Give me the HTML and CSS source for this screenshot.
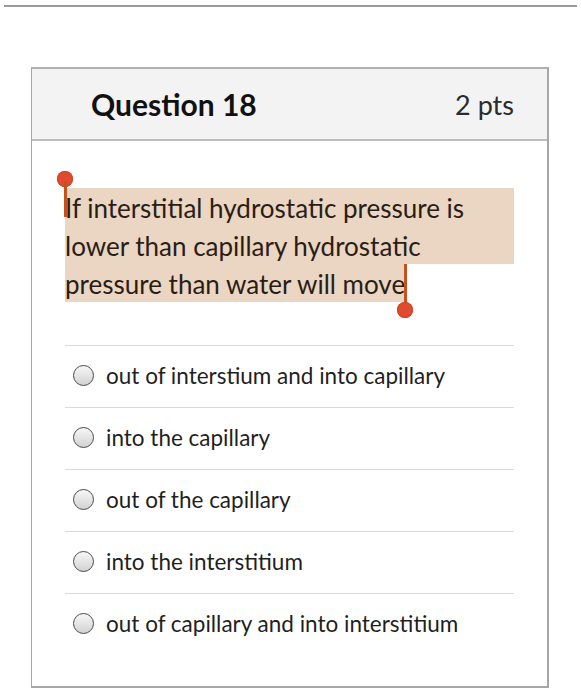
FILE: index.html
```html
<!DOCTYPE html>
<html lang="en">
<head>
<meta charset="utf-8">
<title>Question 18</title>
<link rel="stylesheet" href="styles.css">
</head>
<body>
<div class="top-rule"></div>
<div class="card">
  <div class="card-header">
    <h2 class="q-title">Question 18</h2>
    <span class="q-pts">2 pts</span>
  </div>
  <div class="card-body">
    <div class="q-text">
      <span class="sel-line">If interstitial hydrostatic pressure is</span>
      <span class="sel-line">lower than capillary hydrostatic</span>
      <span class="sel-last">pressure than water will move<span class="handle handle-end"><span class="stem"></span><span class="knob"></span></span></span>
      <span class="handle handle-start"><span class="knob"></span><span class="stem"></span></span>
    </div>
    <ul class="answers">
      <li class="answer"><span class="radio"></span><span class="answer-text">out of interstium and into capillary</span></li>
      <li class="answer"><span class="radio"></span><span class="answer-text">into the capillary</span></li>
      <li class="answer"><span class="radio"></span><span class="answer-text">out of the capillary</span></li>
      <li class="answer"><span class="radio"></span><span class="answer-text">into the interstitium</span></li>
      <li class="answer"><span class="radio"></span><span class="answer-text">out of capillary and into interstitium</span></li>
    </ul>
  </div>
</div>
</body>
</html>
```

FILE: styles.css
```css
* { box-sizing: border-box; }
html, body { margin: 0; padding: 0; background: #fff; }
body {
  font-family: Lato, "Open Sans", "Liberation Sans", sans-serif;
  color: #1e1a1a;
  width: 581px;
  height: 693px;
  overflow: hidden;
}
.top-rule {
  margin: 5px 0 0 4px;
  width: 573px;
  height: 2px;
  background: #9a9a9a;
}
.card {
  margin: 60px 0 0 31px;
  width: 518px;
  height: 621px;
  border-style: solid;
  border-width: 2px 2px 2px 1px;
  border-color: #b0b0b0 #a6a6a6 #a6a6a6 #a6a6a6;
}
.card-header {
  display: flex;
  align-items: center;
  justify-content: space-between;
  height: 72px;
  padding: 0 33px 0 59px;
  background: #f3f3f3;
  border-bottom: 2px solid #bdbdbd;
}
.q-title {
  margin: 0;
  font-size: 30px;
  font-weight: 700;
  color: #111;
}
.q-pts {
  font-size: 27px;
  color: #2b2b2b;
}
.card-body {
  padding: 47px 33px 0 33px;
}
.q-text {
  position: relative;
  display: flex;
  flex-direction: column;
  align-items: flex-start;
  font-size: 26px;
  line-height: 38px;
  color: #2a1d16;
}
.sel-line {
  display: block;
  align-self: stretch;
  background: #ead6c2;
  white-space: nowrap;
  padding-top: 1px;
  height: 38px;
}
.sel-last {
  position: relative;
  display: block;
  background: #ead6c2;
  white-space: nowrap;
  padding-top: 1px;
  height: 38px;
}
.handle {
  position: absolute;
  display: flex;
  flex-direction: column;
  align-items: center;
  width: 16px;
}
.handle-start { left: -8px; top: -17px; }
.handle-end { right: -8px; top: 0; }
.knob {
  width: 16px;
  height: 16px;
  border-radius: 50%;
  background: #e04a2f;
  box-shadow: inset 0 0 0 1px #d4441f;
}
.stem {
  width: 3px;
  background: #c5521c;
}
.handle-start .stem { height: 36px; margin-top: -6px; }
.handle-end .stem { height: 44px; margin-bottom: -6px; }
.answers {
  list-style: none;
  margin: 43px 0 0 0;
  padding: 0;
}
.answer {
  display: flex;
  align-items: center;
  height: 62px;
  padding: 0 0 2px 8px;
  border-top: 1px solid #dadada;
  font-size: 22.5px;
  color: #1f1f1f;
}
.radio {
  flex: none;
  width: 21px;
  height: 21px;
  border-radius: 50%;
  border: 1.5px solid #4a4a4a;
  background: linear-gradient(#f7f7f7, #d2d2d2);
  margin-right: 12px;
}
```
